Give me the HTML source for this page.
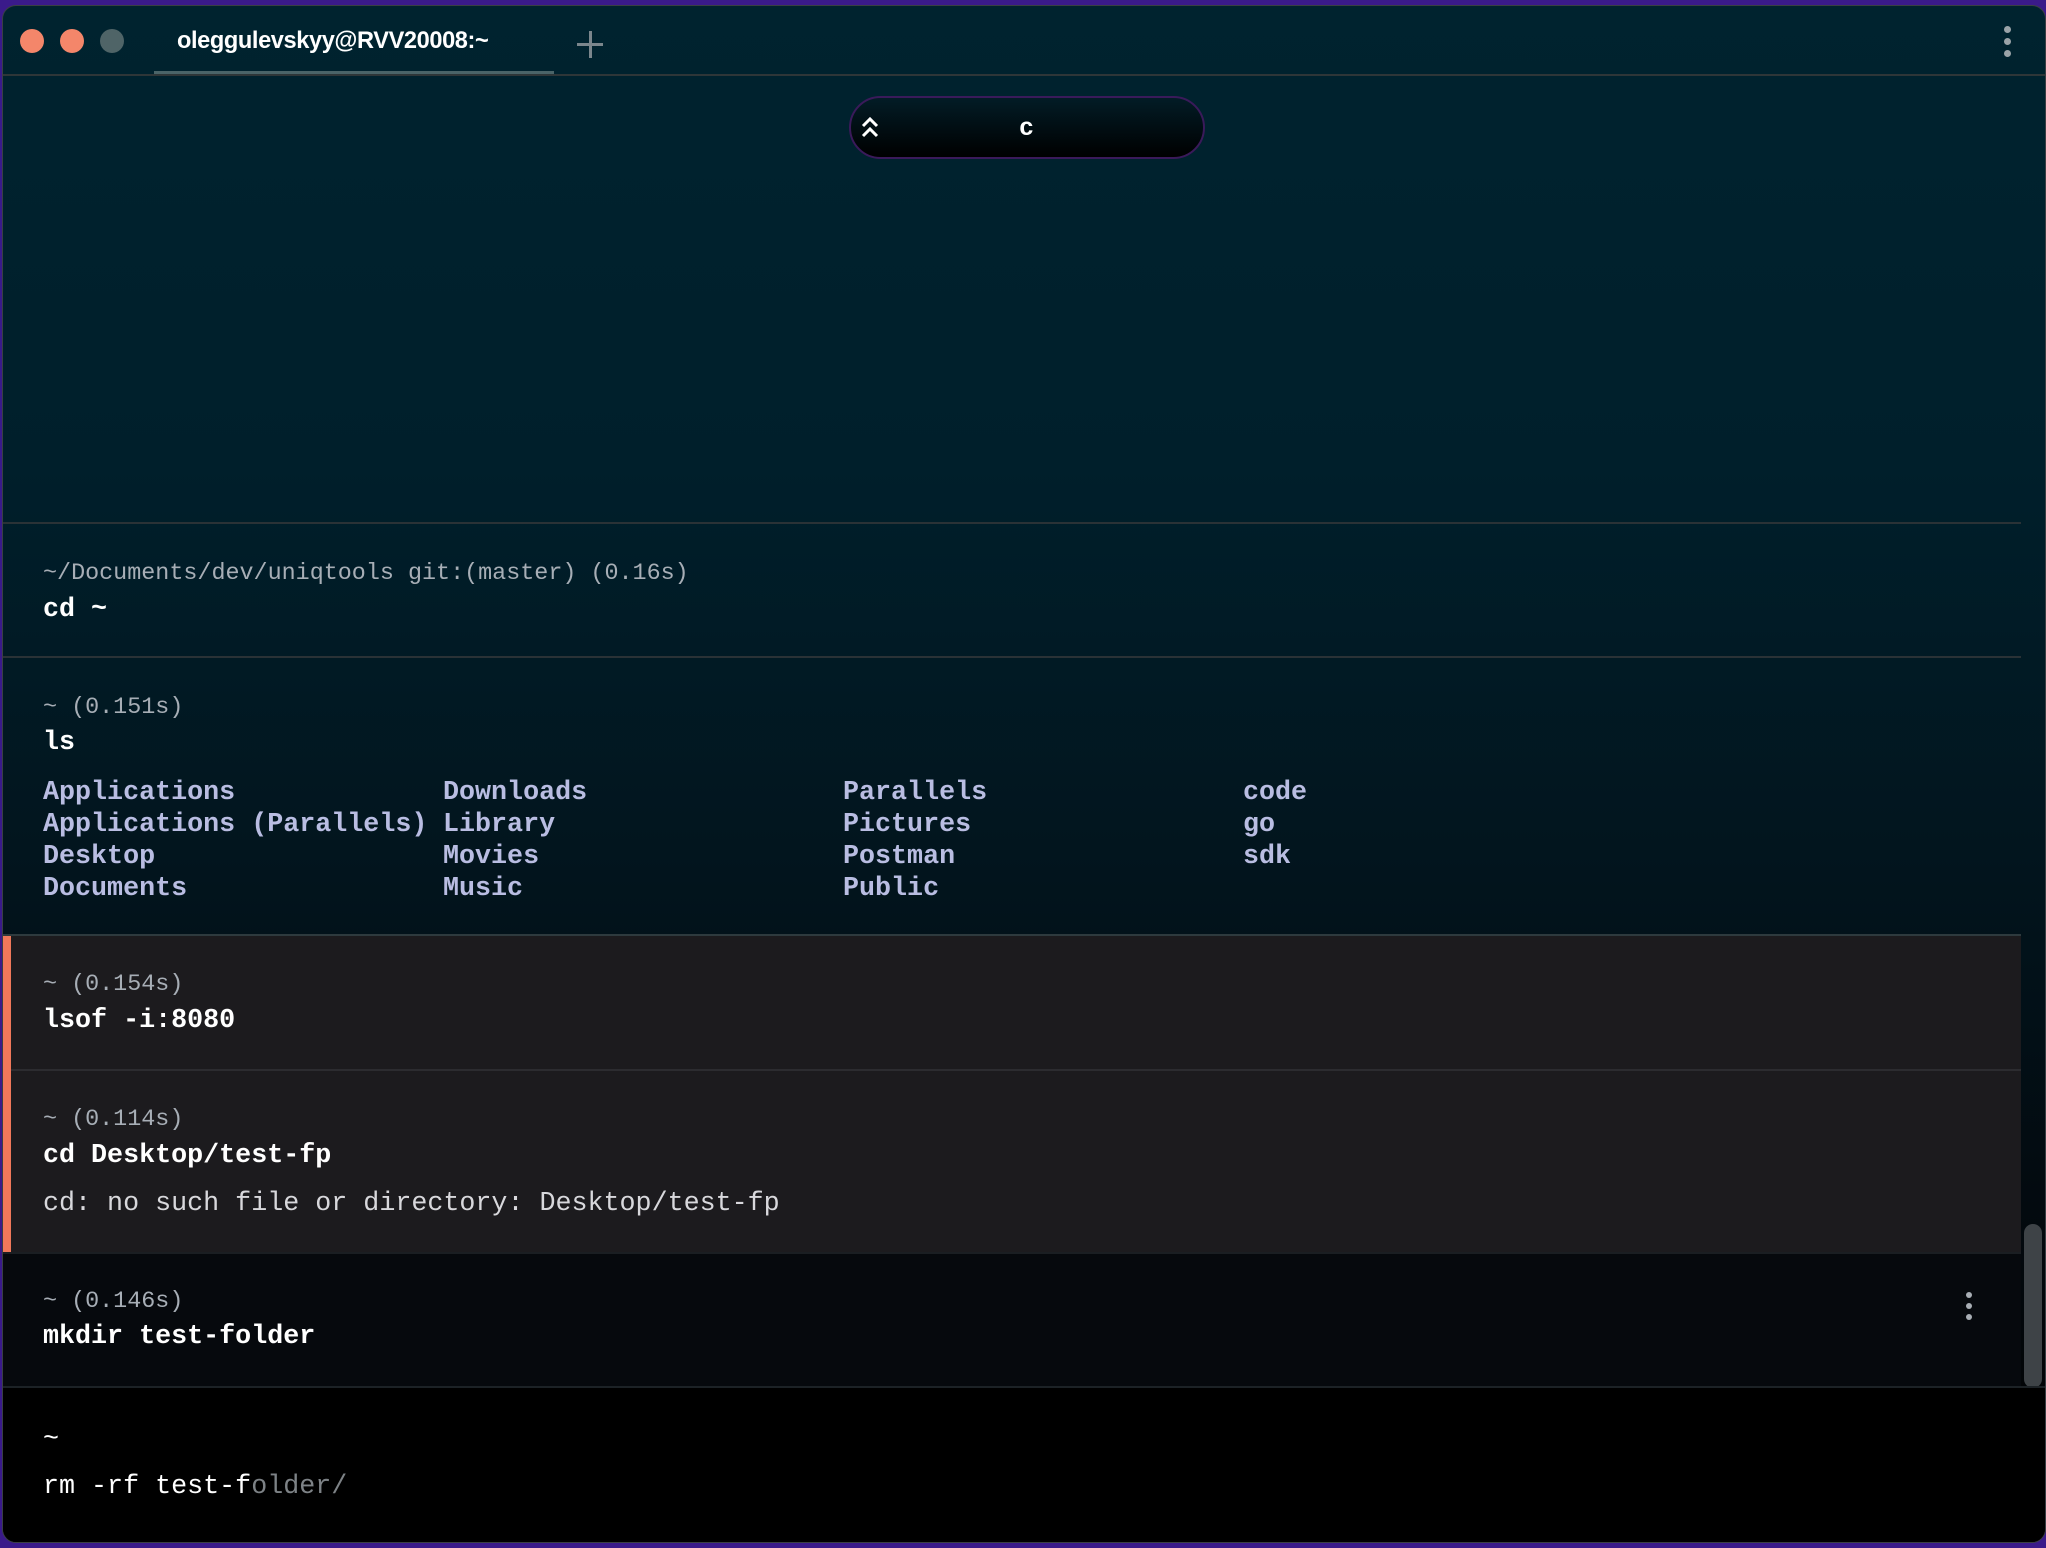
<!DOCTYPE html>
<html><head><meta charset="utf-8"><style>
*{margin:0;padding:0;box-sizing:border-box}
html,body{width:2046px;height:1548px;overflow:hidden;background:#3a1a8a}
.win{position:absolute;left:2px;top:5px;width:2044px;height:1538px;border-radius:14px;overflow:hidden;
background:linear-gradient(180deg,#00232f 0%,#001f2b 30%,#02151e 55%,#03090e 80%,#000 100%);border:1px solid #3a3f44}
.t{position:absolute;white-space:pre;font-family:"Liberation Mono",monospace;z-index:3}
.dot{position:absolute;width:24px;height:24px;border-radius:50%;top:23px}
.blk{position:absolute;left:0;width:2018px;border-top:2px solid #2a3236}
.p{font-size:23.4px;color:#a7aeb6}
.c{font-size:26.7px;color:#fff;font-weight:bold}
.o{font-size:26.7px;color:#b9bde2;font-weight:bold}
.e{font-size:26.7px;color:#d8d8dc}
</style></head><body>
<div class="win">
<div class="dot" style="left:17px;background:#f4866a"></div>
<div class="dot" style="left:57px;background:#f4866a"></div>
<div class="dot" style="left:97px;background:#4f6467"></div>
<div class="t" style="left:174px;top:22px;font-family:'Liberation Sans',sans-serif;font-weight:bold;font-size:23.6px;color:#fff;letter-spacing:-0.4px">oleggulevskyy@RVV20008:~</div>
<div style="position:absolute;left:151px;top:65px;width:400px;height:4px;background:#4a6468"></div>
<div style="position:absolute;left:0;top:68px;width:2044px;height:2px;background:#2e3638"></div>
<div style="position:absolute;left:574px;top:37px;width:26px;height:3px;background:#7b868c"></div>
<div style="position:absolute;left:586px;top:25px;width:3px;height:27px;background:#7b868c"></div>
<div style="position:absolute;left:2001px;top:20px;width:7px;height:7px;border-radius:50%;background:#9aa3a8;box-shadow:0 12px 0 #9aa3a8,0 24px 0 #9aa3a8"></div>
<div style="position:absolute;left:846px;top:90px;width:356px;height:63px;border-radius:32px;background:linear-gradient(180deg,#021c26,#000);border:2px solid #3a1a5a"></div>
<svg style="position:absolute;left:854px;top:106px" width="30" height="30" viewBox="0 0 30 30"><path d="M6 14 L13 7 L20 14 M6 24 L13 17 L20 24" stroke="#fff" stroke-width="3" fill="none"/></svg>
<div class="t c" style="left:1016px;top:108px;font-size:25px">c</div>

<div class="blk" style="top:516px;height:134px"></div>
<div class="t p" style="left:40px;top:555px">~/Documents/dev/uniqtools git:(master) (0.16s)</div>
<div class="t c" style="left:40px;top:589px">cd ~</div>

<div class="blk" style="top:650px;height:280px"></div>
<div class="t p" style="left:40px;top:689px">~ (0.151s)</div>
<div class="t c" style="left:40px;top:722px">ls</div>
<div class="t o" style="left:40px;top:771px;line-height:32px">Applications
Applications (Parallels)
Desktop
Documents</div>
<div class="t o" style="left:440px;top:771px;line-height:32px">Downloads
Library
Movies
Music</div>
<div class="t o" style="left:840px;top:771px;line-height:32px">Parallels
Pictures
Postman
Public</div>
<div class="t o" style="left:1240px;top:771px;line-height:32px">code
go
sdk</div>

<div class="blk" style="top:928px;height:136px;background:#1c1b1e;border-top-color:#2e3a3e"></div>
<div class="t p" style="left:40px;top:966px">~ (0.154s)</div>
<div class="t c" style="left:40px;top:1000px">lsof -i:8080</div>
<div class="blk" style="top:1063px;height:183px;background:#1c1b1e;border-top-color:#2c2c30"></div>
<div style="position:absolute;left:0;top:930px;width:8px;height:316px;background:#f0785a;z-index:2"></div>
<div class="t p" style="left:40px;top:1101px">~ (0.114s)</div>
<div class="t c" style="left:40px;top:1135px">cd Desktop/test-fp</div>
<div class="t e" style="left:40px;top:1183px">cd: no such file or directory: Desktop/test-fp</div>

<div class="blk" style="top:1246px;height:134px;background:#06090d;border-top-color:#1a1e22"></div>
<div class="t p" style="left:40px;top:1283px">~ (0.146s)</div>
<div class="t c" style="left:40px;top:1316px">mkdir test-folder</div>
<div style="position:absolute;left:1963px;top:1286px;width:6px;height:6px;border-radius:50%;background:#a8aeb4;box-shadow:0 11px 0 #a8aeb4,0 22px 0 #a8aeb4"></div>
<div style="position:absolute;left:2021px;top:1218px;width:18px;height:164px;border-radius:9px;background:#3e4347"></div>

<div style="position:absolute;left:0;top:1380px;width:2044px;height:160px;background:#000;border-top:2px solid #1c2226"></div>
<div class="t c" style="left:40px;top:1419px;font-weight:normal">~</div>
<div class="t e" style="left:40px;top:1466px;color:#fff">rm -rf test-f<span style="color:#7d8286">older/</span></div>
</div>
</body></html>
